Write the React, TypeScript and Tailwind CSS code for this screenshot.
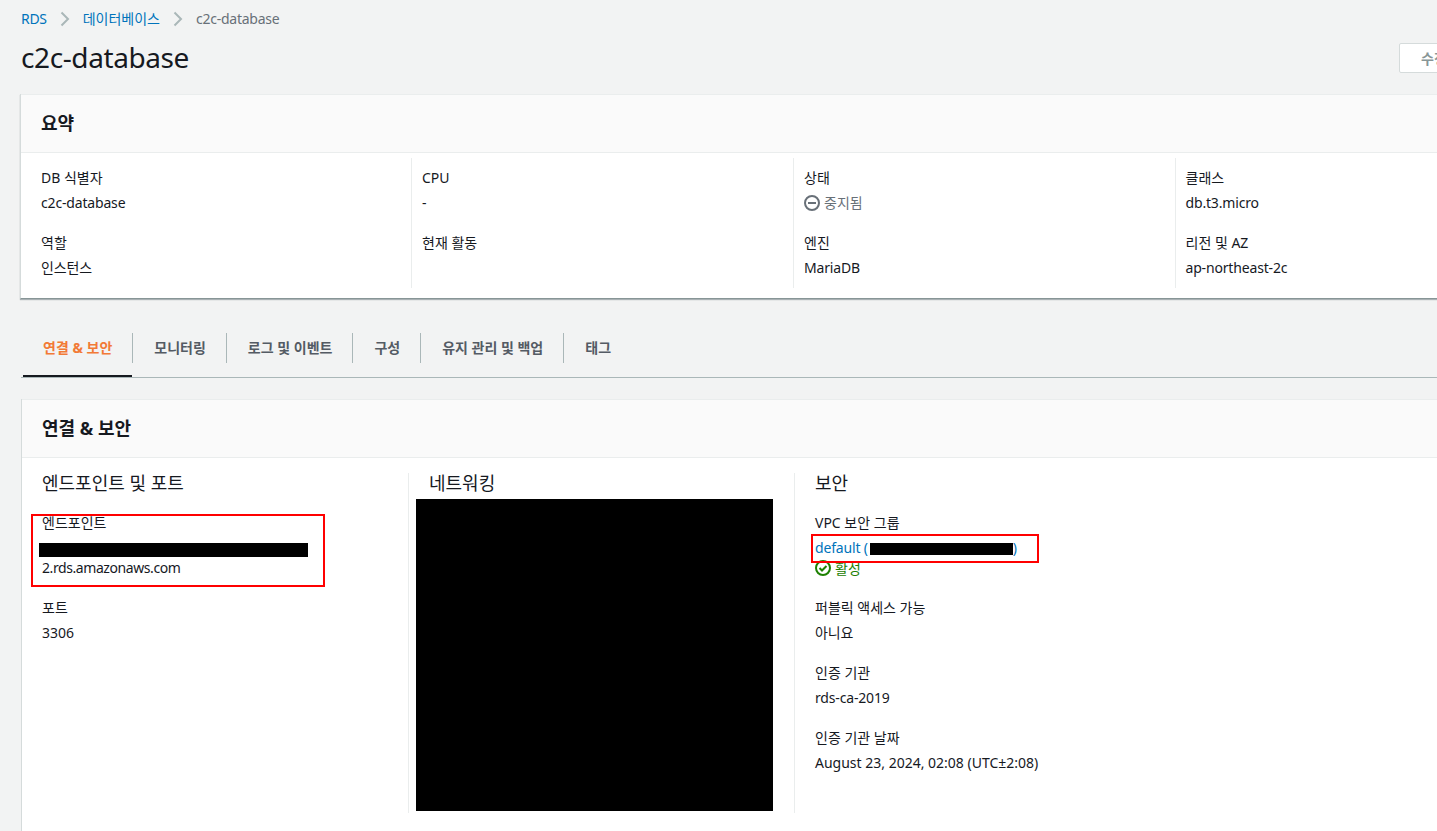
import React from 'react';

const fontFamily = 'font-["Noto_Sans","Noto_Sans_CJK_KR",sans-serif]';

const Field = ({ label, value, className }: { label: string; value: React.ReactNode; className?: string }) => (
  <div className={className}>
    <div className="h-[25px] text-[14px] leading-[20px] text-[#16191f]">{label}</div>
    <div className="h-[20px] text-[14px] leading-[20px] tracking-[-0.17px] text-[#16191f]">{value}</div>
  </div>
);

const Chevron = () => (
  <svg width="10" height="16" viewBox="0 0 10 16" fill="none" className="shrink-0">
    <path d="M1.5 1.5 8 8l-6.5 6.5" stroke="#aab7b8" strokeWidth="2" />
  </svg>
);

const StoppedIcon = () => (
  <svg width="16" height="16" viewBox="0 0 16 16" fill="none" className="shrink-0">
    <circle cx="8" cy="8" r="7" stroke="#687078" strokeWidth="2" />
    <path d="M4 8h8" stroke="#687078" strokeWidth="2" />
  </svg>
);

const ActiveIcon = () => (
  <svg width="16" height="16" viewBox="0 0 16 16" fill="none" className="shrink-0">
    <circle cx="8" cy="8" r="7" stroke="#1d8102" strokeWidth="2" />
    <path d="M4.5 8l2.5 2.5L11.5 6" stroke="#1d8102" strokeWidth="2" />
  </svg>
);

const summaryColumns = [
  [
    { label: 'DB 식별자', value: 'c2c-database' },
    { label: '역할', value: '인스턴스' },
  ],
  [
    { label: 'CPU', value: '-' },
    { label: '현재 활동', value: '' },
  ],
  [
    {
      label: '상태',
      value: (
        <span className="flex items-center gap-[4px] tracking-normal text-[#687078]">
          <StoppedIcon />
          <span>중지됨</span>
        </span>
      ),
    },
    { label: '엔진', value: 'MariaDB' },
  ],
  [
    { label: '클래스', value: 'db.t3.micro' },
    { label: '리전 및 AZ', value: 'ap-northeast-2c' },
  ],
];

const tabs = ['연결 & 보안', '모니터링', '로그 및 이벤트', '구성', '유지 관리 및 백업', '태그'];

const App: React.FC = () => {
  return (
    <div className={`h-[831px] w-[1437px] overflow-hidden bg-[#f2f3f3] pl-[21px] ${fontFamily}`}>
      <div className="w-[1560px]">
        {/* breadcrumb */}
        <div className="flex h-[37px] items-center text-[14px]">
          <span className="tracking-[-0.3px] text-[#0073bb]">RDS</span>
          <span className="mx-[13px]"><Chevron /></span>
          <span className="text-[#0073bb]">데이터베이스</span>
          <span className="mx-[13px]"><Chevron /></span>
          <span className="tracking-[-0.25px] text-[#687078]">c2c-database</span>
        </div>

        <div className="flex h-[57px] items-start justify-between">
          <h1 className="text-[28px] leading-[40px] font-normal tracking-[-0.4px] text-[#16191f]">c2c-database</h1>
          <div className="mr-[122px] mt-[6px] flex h-[30px] w-[60px] items-center rounded-[2px] border border-[#d5dbdb] bg-white pl-[21px] text-[14px] font-bold text-[#879596]">
            <span className="whitespace-nowrap">수정</span>
          </div>
        </div>

        {/* summary card */}
        <section className="-ml-px h-[205px] border-b border-[#879596] border-l border-l-[#d5dbdb] bg-white shadow-[0_1px_1px_0_rgba(0,28,36,0.3)]">
          <div className="flex h-[59px] items-center border-b border-t border-[#eaeded] bg-[#fafafa] pl-[20px]">
            <h2 className="text-[18px] font-bold text-[#16191f]">요약</h2>
          </div>
          <div className="flex pt-[5px]">
            {summaryColumns.map((col, i) => (
              <div
                key={i}
                className={`h-[130px] shrink-0 pt-[10px] ${i === 0 ? 'w-[390px] pl-[20px]' : i === 1 ? 'w-[382px] border-l border-[#eaeded] pl-[10px]' : 'w-[381.5px] border-l border-[#eaeded] pl-[10px]'}`}
              >
                {col.map((f, j) => (
                  <Field key={j} label={f.label} value={f.value} className={j === 1 ? 'mt-[20px]' : ''} />
                ))}
              </div>
            ))}
          </div>
        </section>

        {/* tabs */}
        <div className="mt-[27px] flex h-[52px] items-start border-b border-[#aab7b8]">
          {tabs.map((t, i) => (
            <div
              key={t}
              className={`relative mt-[7px] flex h-[30px] items-center whitespace-nowrap pb-[2px] text-[14px] font-bold ${
                i === 0 ? 'ml-[2px] px-[20px] text-[#f27a36]' : 'border-l border-[#aab7b8] pl-[21px] pr-[20px] text-[#545b64]'
              }`}
            >
              {t}
              {i === 0 && <span className="absolute bottom-[-14px] left-0 right-0 h-[2px] bg-[#16191f]" />}
            </div>
          ))}
        </div>

        {/* connectivity card */}
        <section className="relative mt-[21px] h-[500px] border-l border-[#d5dbdb] bg-white">
          <div className="flex h-[59px] items-center border-b border-t border-[#eaeded] bg-[#fafafa] pl-[20px]">
            <h2 className="text-[18px] font-bold text-[#16191f]">연결 &amp; 보안</h2>
          </div>
          <div className="flex pt-[15px]">
            <div className="h-[340px] w-[386px] pl-[20px]">
              <h3 className="text-[18px] leading-[20px] font-normal text-[#16191f]">엔드포인트 및 포트</h3>
              <div className="mt-[20px] h-[25px] text-[14px] leading-[20px] text-[#16191f]">엔드포인트</div>
              <div className="mt-[20px] h-[20px] text-[14px] leading-[20px] tracking-[-0.42px] text-[#16191f]">2.rds.amazonaws.com</div>
              <Field label="포트" value={<span className="tracking-normal">3306</span>} className="mt-[20px]" />
            </div>
            <div className="h-[340px] w-[386px] border-l border-[#eaeded] pl-[20px]">
              <h3 className="text-[18px] leading-[20px] font-normal text-[#16191f]">네트워킹</h3>
            </div>
            <div className="h-[340px] border-l border-[#eaeded] pl-[20px]">
              <h3 className="text-[18px] leading-[20px] font-normal text-[#16191f]">보안</h3>
              <div className="mt-[20px] h-[25px] text-[14px] leading-[20px] text-[#16191f]">VPC 보안 그룹</div>
              <div className="flex h-[20px] items-center text-[14px] leading-[20px] tracking-[-0.17px] text-[#0073bb]">
                <span>default (</span>
                <span className="w-[145px]" />
                <span>)</span>
              </div>
              <div className="flex h-[20px] items-center gap-[4px] text-[14px] text-[#1d8102]">
                <ActiveIcon />
                <span>활성</span>
              </div>
              <Field label="퍼블릭 액세스 가능" value="아니요" className="mt-[20px]" />
              <Field label="인증 기관" value="rds-ca-2019" className="mt-[20px]" />
              <Field
                label="인증 기관 날짜"
                value={<span className="tracking-normal">August 23, 2024, 02:08 (UTC±2:08)</span>}
                className="mt-[20px]"
              />
            </div>
          </div>

          {/* redactions and annotations laid over the screenshot */}
          <div className="absolute left-[17px] top-[144px] h-[14px] w-[269px] bg-black" />
          <div className="absolute left-[394px] top-[100px] h-[312px] w-[357px] bg-black" />
          <div className="absolute left-[848px] top-[144px] h-[12px] w-[143px] bg-black" />
          <div className="absolute left-[9px] top-[115px] h-[73px] w-[294px] border-2 border-[#ff0000]" />
          <div className="absolute left-[789px] top-[135px] h-[29px] w-[228px] border-2 border-[#ff0000]" />
        </section>
      </div>
    </div>
  );
};

export default App;
